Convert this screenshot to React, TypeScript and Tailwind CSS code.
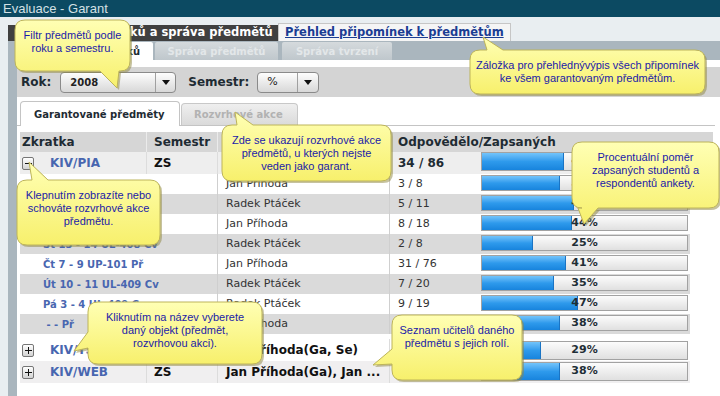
import React from 'react';

type Side = 'top' | 'bottom' | 'left';

interface Callout {
  x: number;
  y: number;
  w: number;
  h: number;
  side: Side;
  a: number;
  b: number;
  tx: number;
  ty: number;
  lines: string[];
}

const subRows = [
  { label: 'Po 9 - 10 UL-408 Cv', teacher: 'Jan Příhoda', count: '3 / 8', pct: 38 },
  { label: 'Po 11 - 12 UL-408 Cv', teacher: 'Radek Ptáček', count: '5 / 11', pct: 45 },
  { label: 'St 9 - 10 UL-408 Cv', teacher: 'Jan Příhoda', count: '8 / 18', pct: 44 },
  { label: 'St 13 - 14 UL-408 Cv', teacher: 'Radek Ptáček', count: '2 / 8', pct: 25 },
  { label: 'Čt 7 - 9 UP-101 Př', teacher: 'Jan Příhoda', count: '31 / 76', pct: 41 },
  { label: 'Út 10 - 11 UL-409 Cv', teacher: 'Radek Ptáček', count: '7 / 20', pct: 35 },
  { label: 'Pá 3 - 4 UL-409 Cv', teacher: 'Radek Ptáček', count: '9 / 19', pct: 47 },
  { label: '\u00a0- - Př', teacher: 'Jan Příhoda', count: '14 / 37', pct: 38 },
];

const callouts: Callout[] = [
  { x: 15, y: 20, w: 115, h: 51, side: 'bottom', a: 100, b: 119, tx: 117, ty: 88, lines: ['Filtr předmětů podle', 'roku a semestru.'] },
  { x: 470, y: 50, w: 235, h: 44, side: 'top', a: 487, b: 503, tx: 483, ty: 37, lines: ['Záložka pro přehlednývýpis všech připomínek', 'ke všem garantovaným předmětům.'] },
  { x: 222, y: 125, w: 169, h: 56, side: 'top', a: 237, b: 253, tx: 235, ty: 112, lines: ['Zde se ukazují rozvrhové akce', 'předmětů, u kterých nejste', 'veden jako garant.'] },
  { x: 17, y: 180, w: 143, h: 65, side: 'top', a: 32, b: 48, tx: 29, ty: 162, lines: ['Klepnutím zobrazíte nebo', 'schováte rozvrhové akce', 'předmětu.'] },
  { x: 572, y: 142, w: 147, h: 66, side: 'bottom', a: 578, b: 598, tx: 584, ty: 224, lines: ['Procentuální poměr', 'zapsaných studentů a', 'respondentů ankety.'] },
  { x: 88, y: 302, w: 174, h: 62, side: 'left', a: 332, b: 348, tx: 74, ty: 351, lines: ['Kliknutím na název vyberete', 'daný objekt (předmět,', 'rozvrhovou akci).'] },
  { x: 392, y: 315, w: 130, h: 65, side: 'left', a: 349, b: 364, tx: 373, ty: 365, lines: ['Seznam učitelů daného', 'předmětu s jejich rolí.'] },
];

// rounded box with a pointer cut into one edge
function bubblePath(c: Callout) {
  const { x, y, w, h, a, b, tx, ty } = c;
  const r = 10;
  const R = x + w;
  const B = y + h;
  const topEdge = c.side === 'top' ? `H ${a} L ${tx} ${ty} L ${b} ${y} H ${R - r}` : `H ${R - r}`;
  const bottomEdge = c.side === 'bottom' ? `H ${b} L ${tx} ${ty} L ${a} ${B} H ${x + r}` : `H ${x + r}`;
  const leftEdge = c.side === 'left' ? `V ${b} L ${tx} ${ty} L ${x} ${a} V ${y + r}` : `V ${y + r}`;
  return `M ${x + r} ${y} ${topEdge} Q ${R} ${y} ${R} ${y + r} V ${B - r} Q ${R} ${B} ${R - r} ${B} ${bottomEdge} Q ${x} ${B} ${x} ${B - r} ${leftEdge} Q ${x} ${y} ${x + r} ${y} Z`;
}

function Arrow() {
  return (
    <svg width="8" height="5" viewBox="0 0 8 5">
      <polygon points="0,0 8,0 4,5" fill="#111" />
    </svg>
  );
}

function Toggle({ open }: { open: boolean }) {
  return (
    <div className="w-[12px] h-[13px] rounded-[2px] border border-[#767676] bg-gradient-to-b from-white to-[#d2d2d2] flex items-center justify-center">
      <svg width="7" height="7" viewBox="0 0 7 7">
        <path d="M0 3.5H7" stroke="#111" strokeWidth="1" />
        {!open && <path d="M3.5 0V7" stroke="#111" strokeWidth="1" />}
      </svg>
    </div>
  );
}

function Bar({ pct, big }: { pct: number; big?: boolean }) {
  return (
    <div
      className={`relative w-[207px] border border-[#a2a2a2] bg-gradient-to-b from-[#fcfcfc] to-[#e0e0e0] flex items-center justify-center ${
        big ? 'h-[19px]' : 'h-[16px]'
      }`}
    >
      <div
        className="absolute left-0 top-0 bottom-0 bg-gradient-to-b from-[#72c4fb] via-[#2e9aec] to-[#1784dd] border-r border-[#1a74c4]"
        style={{ width: `${pct}%` }}
      />
      <span className="relative text-[11px] font-bold text-[#1f2e36]">{pct}%</span>
    </div>
  );
}

export default function App() {
  return (
    <div className="relative w-[720px] h-[396px] overflow-hidden bg-[#e9eef1] font-['DejaVu_Sans',sans-serif]">
      {/* Title bar */}
      <div className="h-[17px] bg-[#0c4a62] pl-[3px] flex items-center text-[13px] text-[#d3e0e5] font-['Liberation_Sans',Arial,sans-serif]">
        Evaluace - Garant
      </div>

      <div className="pl-[8px] pt-[6px]">
        {/* Main tabs */}
        <div className="h-[18px] flex items-end">
          <div className="w-[270px] h-[16px] bg-[#404040] pl-[26px] flex items-center text-[11.5px] font-bold text-white whitespace-nowrap overflow-hidden">
            Přehled výsledků a správa předmětů
          </div>
          <div className="w-[233px] h-[18px] bg-[#f5f5f5] border border-b-0 border-[#c6c6c6] pl-[6px] flex items-center text-[11.5px] font-bold text-[#1b3d93] underline whitespace-nowrap">
            Přehled připomínek k předmětům
          </div>
        </div>

        {/* Sub tabs */}
        <div className="h-[19px] bg-[#aab6be] flex items-end pl-[9px]">
          <div className="w-[136px] h-[18px] bg-white rounded-t-[2px] pl-[26px] flex items-center text-[10px] font-bold text-[#1e2b33] whitespace-nowrap">
            Přehled výsledků
          </div>
          <div className="ml-[2px] w-[123px] h-[18px] bg-gradient-to-b from-[#d5dadd] to-[#bfc7cc] rounded-t-[2px] flex items-center justify-center text-[10px] font-bold text-[#e3e7e9]">
            Správa předmětů
          </div>
          <div className="ml-[4px] w-[110px] h-[18px] bg-gradient-to-b from-[#d5dadd] to-[#bfc7cc] rounded-t-[2px] flex items-center justify-center text-[10px] font-bold text-[#e3e7e9]">
            Správa tvrzení
          </div>
        </div>

        <div className="flex h-[336px]">
          <div className="w-[9px] bg-[#aab6be]" />
          <div className="flex-1 bg-white pt-[7px]">
            {/* Filter */}
            <div className="h-[30px] bg-[#d4d4d4] flex items-center pl-[4px] text-[12px] font-bold text-[#1e2b33]">
              <span>Rok:</span>
              <div className="ml-[9px] flex h-[21px] w-[116px] rounded-[4px] border border-[#8a8a8a] bg-gradient-to-b from-[#fdfdfd] to-[#d8d8d8]">
                <div className="flex-1 pl-[9px] flex items-center text-[10px] font-bold text-[#222]">2008</div>
                <div className="w-[20px] border-l border-[#a0a0a0] flex items-center justify-center">
                  <Arrow />
                </div>
              </div>
              <span className="ml-[12px]">Semestr:</span>
              <div className="ml-[8px] flex h-[21px] w-[62px] rounded-[4px] border border-[#8a8a8a] bg-gradient-to-b from-[#fdfdfd] to-[#d8d8d8]">
                <div className="flex-1 pl-[9px] flex items-center text-[11px] font-normal text-[#222]">%</div>
                <div className="w-[21px] border-l border-[#a0a0a0] flex items-center justify-center">
                  <Arrow />
                </div>
              </div>
            </div>

            {/* Tabs */}
            <div className="mt-[4px] mr-[5px] h-[25px] flex items-end pl-[3px] border-b border-[#c4c4c4]">
              <div className="-mb-px w-[160px] h-[25px] bg-white border border-b-0 border-[#c4c4c4] rounded-t-[4px] pl-[13px] flex items-center text-[10px] font-bold text-[#1e2b33]">
                Garantované předměty
              </div>
              <div className="ml-px w-[117px] h-[22px] bg-gradient-to-b from-[#efefef] to-[#dadada] border border-b-0 border-[#c8c8c8] rounded-t-[4px] pl-[12px] flex items-center text-[10px] font-bold text-[#b2b2b2]">
                Rozvrhové akce
              </div>
            </div>

            {/* Table */}
            <div className="mt-[6px] ml-[3px]">
              <div className="w-[693px] h-[20px] bg-[#d6d6d6] flex text-[12px] font-bold text-[#1e2b33]">
                <div className="w-[127px] pl-[2px] flex items-center border-r border-[#ebebeb]">Zkratka</div>
                <div className="w-[71px] pl-[7px] flex items-center border-r border-[#ebebeb]">Semestr</div>
                <div className="w-[172px]" />
                <div className="flex-1 pl-[8px] flex items-center whitespace-nowrap">Odpovědělo/Zapsaných</div>
              </div>

              <div className="w-[670px] h-[22px] bg-[#eeeeee] flex">
                <div className="w-[127px] pl-[2px] flex items-center border-r border-[#dcdcdc]">
                  <Toggle open />
                  <span className="ml-[16px] text-[12px] font-bold text-[#4866b0]">KIV/PIA</span>
                </div>
                <div className="w-[71px] pl-[7px] flex items-center border-r border-[#dcdcdc] text-[12px] font-bold text-[#111]">ZS</div>
                <div className="w-[172px] pl-[8px] flex items-center border-r border-[#dcdcdc] text-[12px] font-bold text-[#111] whitespace-nowrap overflow-hidden">
                  Jan Příhoda(Ga, Se)
                </div>
                <div className="w-[88px] pl-[8px] flex items-center text-[12px] font-bold text-[#1e2b33]">34 / 86</div>
                <div className="flex-1 pl-[3px]">
                  <Bar pct={40} big />
                </div>
              </div>

              {subRows.map((r, i) => (
                <div key={i} className={`w-[670px] h-[20px] flex ${i % 2 === 1 ? 'bg-[#dadada]' : 'bg-white'}`}>
                  <div className="w-[198px] pl-[23px] flex items-center border-r border-[#cfcfcf] text-[10px] font-bold text-[#4866b0] whitespace-nowrap">
                    {r.label}
                  </div>
                  <div className="w-[172px] pl-[8px] flex items-center border-r border-[#cfcfcf] text-[11px] text-[#333]">{r.teacher}</div>
                  <div className="w-[88px] pl-[8px] flex items-center text-[11px] text-[#333]">{r.count}</div>
                  <div className="flex-1 pl-[3px] pt-px">
                    <Bar pct={r.pct} />
                  </div>
                </div>
              ))}

              <div className="mt-[5px] w-[670px] h-[22px] bg-white flex">
                <div className="w-[127px] pl-[2px] flex items-center border-r border-[#dcdcdc]">
                  <Toggle open={false} />
                  <span className="ml-[16px] text-[12px] font-bold text-[#4866b0]">KIV/TS</span>
                </div>
                <div className="w-[71px] pl-[7px] flex items-center border-r border-[#dcdcdc] text-[12px] font-bold text-[#111]">ZS</div>
                <div className="w-[172px] pl-[8px] flex items-center border-r border-[#dcdcdc] text-[12px] font-bold text-[#111] whitespace-nowrap overflow-hidden">
                  Jan Příhoda(Ga, Se)
                </div>
                <div className="w-[88px] pl-[8px] flex items-center text-[12px] font-bold text-[#1e2b33]">12 / 41</div>
                <div className="flex-1 pl-[3px] pt-[2px]">
                  <Bar pct={29} big />
                </div>
              </div>

              <div className="w-[670px] h-[22px] bg-[#f0eff0] flex">
                <div className="w-[127px] pl-[2px] flex items-center border-r border-[#dcdcdc]">
                  <Toggle open={false} />
                  <span className="ml-[16px] text-[12px] font-bold text-[#4866b0]">KIV/WEB</span>
                </div>
                <div className="w-[71px] pl-[7px] flex items-center border-r border-[#dcdcdc] text-[12px] font-bold text-[#111]">ZS</div>
                <div className="w-[172px] pl-[8px] flex items-center border-r border-[#dcdcdc] text-[12px] font-bold text-[#111] whitespace-nowrap overflow-hidden">
                  Jan Příhoda(Ga), Jan ...
                </div>
                <div className="w-[88px] pl-[8px] flex items-center text-[12px] font-bold text-[#1e2b33]">15 / 40</div>
                <div className="flex-1 pl-[3px] pt-px">
                  <Bar pct={38} big />
                </div>
              </div>
            </div>
          </div>
        </div>
      </div>

      {/* Help callouts */}
      <svg className="absolute left-0 top-0 pointer-events-none" width="720" height="396" viewBox="0 0 720 396">
        <defs>
          <linearGradient id="tip" x1="0" y1="0" x2="0" y2="1">
            <stop offset="0" stopColor="#ffffb4" />
            <stop offset="1" stopColor="#f7f06c" />
          </linearGradient>
        </defs>
        {callouts.map((c, i) => (
          <g key={i}>
            <path d={bubblePath(c)} transform="translate(2 2)" fill="#8d8640" opacity="0.5" />
            <path d={bubblePath(c)} fill="url(#tip)" stroke="#bdb45a" strokeWidth="1" />
          </g>
        ))}
      </svg>
      {callouts.map((c, i) => (
        <div
          key={i}
          className="absolute pt-[9px] flex flex-col items-center text-[11px] leading-[13px] text-[#1b1ba8] font-['Liberation_Sans',Arial,sans-serif] whitespace-nowrap"
          style={{ left: c.x, top: c.y, width: c.w }}
        >
          {c.lines.map((l, j) => (
            <span key={j}>{l}</span>
          ))}
        </div>
      ))}
    </div>
  );
}
